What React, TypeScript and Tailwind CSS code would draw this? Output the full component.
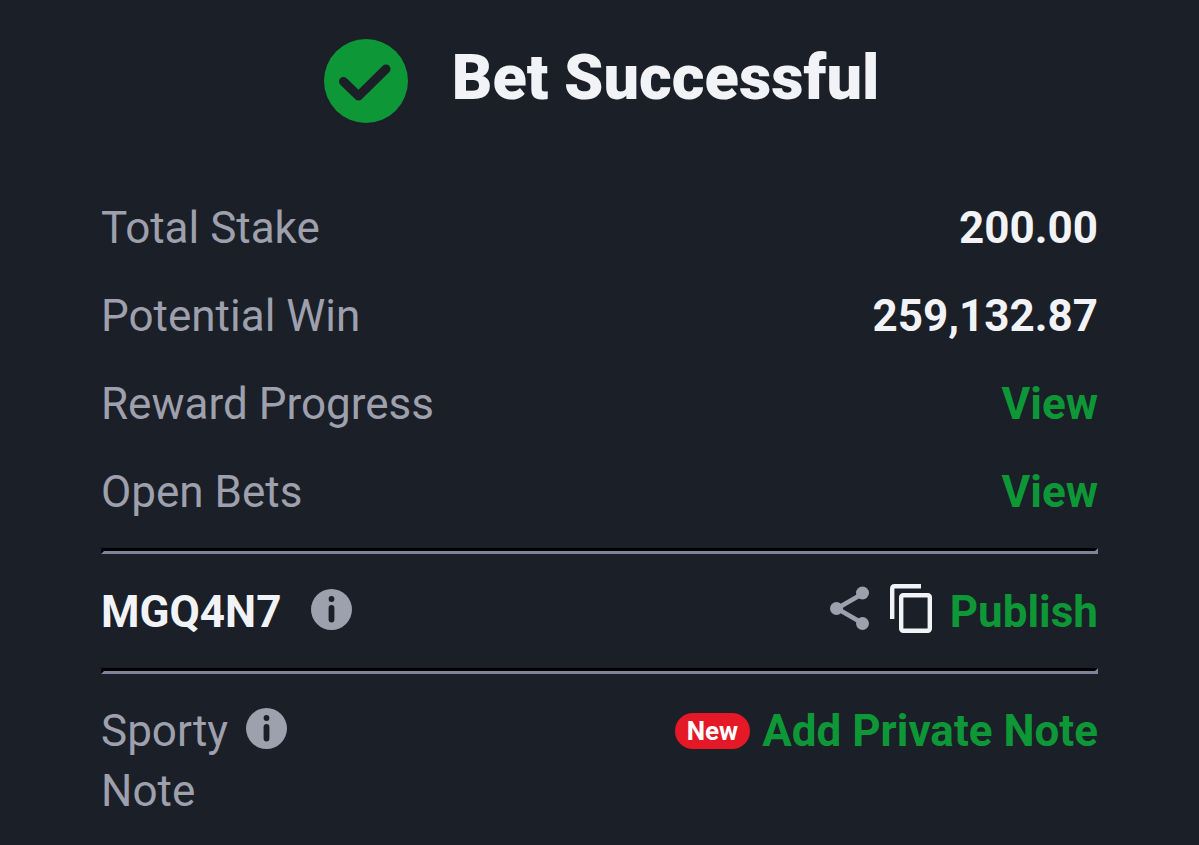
import type { ReactNode } from "react";

function CheckBadge() {
  return (
    <svg className="size-21" viewBox="0 0 84 84" fill="none" aria-hidden="true">
      <circle cx="42" cy="42" r="42" fill="#0d9737" />
      <path
        d="M19.500 42.500 34.500 57 62 30"
        stroke="#1b1f27"
        strokeWidth="9"
        strokeLinecap="round"
        strokeLinejoin="round"
      />
    </svg>
  );
}

function InfoButton({ label }: { label: string }) {
  return (
    <button type="button" aria-label={label} className="shrink-0">
      <svg className="size-[41px]" viewBox="0 0 41 41" aria-hidden="true">
        <circle cx="20.5" cy="20.5" r="20.5" fill="#9ea0ae" />
        <circle cx="20.5" cy="10" r="2.9" fill="#1b1f27" />
        <rect x="17.6" y="16" width="5.8" height="17.5" rx="2.9" fill="#1b1f27" />
      </svg>
    </button>
  );
}

function ShareIcon() {
  return (
    <svg className="h-11 w-10" viewBox="0 0 40 44" fill="#9ea0ae" aria-hidden="true">
      <path d="M33 7.500 7 22.500l26 15" fill="none" stroke="#9ea0ae" strokeWidth="4.6" />
      <circle cx="32.5" cy="7" r="6.500" />
      <circle cx="6.500" cy="22.500" r="6.500" />
      <circle cx="32.5" cy="37.500" r="6.500" />
    </svg>
  );
}

function CopyIcon() {
  return (
    <svg
      className="h-[49px] w-[42px]"
      viewBox="0 0 42 49"
      fill="none"
      stroke="#f2f3f7"
      strokeWidth="4.4"
      aria-hidden="true"
    >
      <path d="M2.200 35V4.700Q2.200 2.200 4.700 2.200H31" />
      <rect x="11.2" y="11.2" width="28.6" height="35.6" rx="2" />
    </svg>
  );
}

function Row({ label, children }: { label: string; children: ReactNode }) {
  return (
    <div className="flex items-center justify-between">
      <dt className="text-[#9ea0ae]">{label}</dt>
      <dd className="font-bold text-[#f2f3f7]">{children}</dd>
    </div>
  );
}

function Divider() {
  return (
    <hr className="h-0 border-3 border-t-black border-r-[#7f819d] border-b-[#7f819d] border-l-black" />
  );
}

export default function App() {
  return (
    <main className="min-h-screen bg-[#1b1f27] px-[101px] pt-[39px] pb-6 font-['Roboto',sans-serif] text-[44px] leading-[60px]">
      <header className="flex items-center justify-center gap-11 pl-1">
        <CheckBadge />
        <h1 className="pb-1.5 text-[63px] leading-[76px] font-black text-[#f2f3f7]">
          Bet Successful
        </h1>
      </header>

      <dl className="mt-[75px] mb-[26px] flex flex-col gap-7">
        <Row label="Total Stake">200.00</Row>
        <Row label="Potential Win">259,132.87</Row>
        <Row label="Reward Progress">
          <a href="#rewards" className="text-[#0d9737]">
            View
          </a>
        </Row>
        <Row label="Open Bets">
          <a href="#bets" className="text-[#0d9737]">
            View
          </a>
        </Row>
      </dl>

      <Divider />

      <section className="flex items-center justify-between pt-7 pb-[26px] font-bold">
        <div className="flex items-center gap-[30px]">
          <span className="text-[#f2f3f7]">MGQ4N7</span>
          <div className="flex pb-1.5">
            <InfoButton label="About booking code" />
          </div>
        </div>
        <div className="flex items-center">
          <div className="flex items-center gap-5 pb-2">
            <button type="button" aria-label="Share">
              <ShareIcon />
            </button>
            <button type="button" aria-label="Copy code">
              <CopyIcon />
            </button>
          </div>
          <button type="button" className="ml-[18px] text-[#0d9737]">
            Publish
          </button>
        </div>
      </section>

      <Divider />

      <section className="flex items-start justify-between pt-[27px]">
        <div className="flex items-start gap-[18px]">
          <span className="w-min text-[#9ea0ae]">Sporty Note</span>
          <div className="flex h-[54px] items-center">
            <InfoButton label="About Sporty Note" />
          </div>
        </div>
        <div className="flex items-center gap-3">
          <span className="rounded-full bg-[#e41827] px-3 text-[26px] leading-9 font-bold text-white">
            New
          </span>
          <button type="button" className="font-bold text-[#0d9737]">
            Add Private Note
          </button>
        </div>
      </section>
    </main>
  );
}
